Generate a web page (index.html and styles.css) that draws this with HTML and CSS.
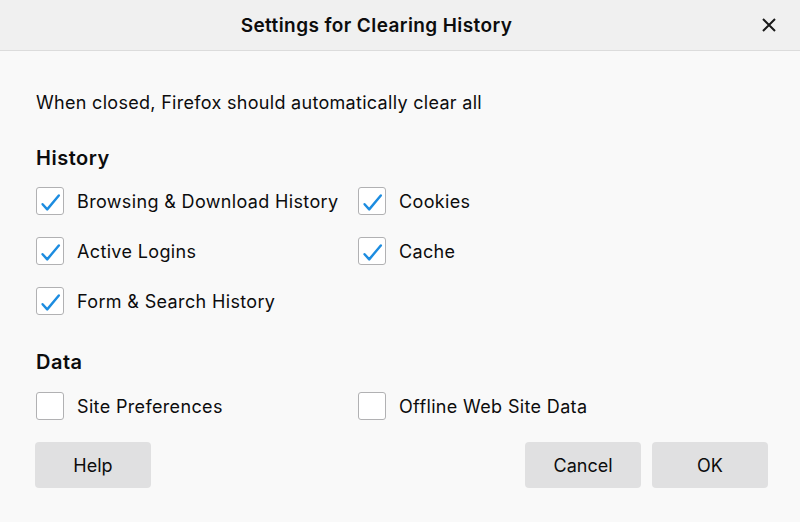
FILE: index.html
```html
<!DOCTYPE html>
<html>
<head>
<meta charset="utf-8">
<link rel="stylesheet" href="styles.css">
</head>
<body>
<div class="dialog">
  <header class="titlebar">
    <h1 class="title">Settings for Clearing History</h1>
    <button class="close" aria-label="Close">
      <svg width="14" height="14" viewBox="0 0 14 14"><path d="M1 1 L13 13 M13 1 L1 13" stroke="#1a1a1a" stroke-width="2" fill="none"/></svg>
    </button>
  </header>
  <main class="content">
    <p class="intro">When closed, Firefox should automatically clear all</p>
    <h2 class="section">History</h2>
    <div class="grid">
      <label class="opt"><span class="box checked"><svg viewBox="0 0 28 28"><path d="M6 17.5 L11 23 L23.5 8" stroke="#1c8ce0" stroke-width="2.6" fill="none" stroke-linecap="round" stroke-linejoin="round"/></svg></span>Browsing &amp; Download History</label>
      <label class="opt"><span class="box checked"><svg viewBox="0 0 28 28"><path d="M6 17.5 L11 23 L23.5 8" stroke="#1c8ce0" stroke-width="2.6" fill="none" stroke-linecap="round" stroke-linejoin="round"/></svg></span>Cookies</label>
      <label class="opt"><span class="box checked"><svg viewBox="0 0 28 28"><path d="M6 17.5 L11 23 L23.5 8" stroke="#1c8ce0" stroke-width="2.6" fill="none" stroke-linecap="round" stroke-linejoin="round"/></svg></span>Active Logins</label>
      <label class="opt"><span class="box checked"><svg viewBox="0 0 28 28"><path d="M6 17.5 L11 23 L23.5 8" stroke="#1c8ce0" stroke-width="2.6" fill="none" stroke-linecap="round" stroke-linejoin="round"/></svg></span>Cache</label>
      <label class="opt"><span class="box checked"><svg viewBox="0 0 28 28"><path d="M6 17.5 L11 23 L23.5 8" stroke="#1c8ce0" stroke-width="2.6" fill="none" stroke-linecap="round" stroke-linejoin="round"/></svg></span>Form &amp; Search History</label>
    </div>
    <h2 class="section data">Data</h2>
    <div class="grid data-grid">
      <label class="opt"><span class="box"></span>Site Preferences</label>
      <label class="opt"><span class="box"></span>Offline Web Site Data</label>
    </div>
    <div class="buttons">
      <button class="btn">Help</button>
      <div class="right">
        <button class="btn">Cancel</button>
        <button class="btn">OK</button>
      </div>
    </div>
  </main>
</div>
</body>
</html>
```
FILE: styles.css
```css
html, body {
  margin: 0;
  padding: 0;
  background: #f9f9f9;
}
body {
  font-family: Inter, "Noto Sans", sans-serif;
  color: #0c0c0d;
  width: 800px;
  height: 522px;
  overflow: hidden;
}
.titlebar {
  height: 51px;
  background: #f0f0f0;
  border-bottom: 1px solid #dcdcdc;
  box-sizing: border-box;
  display: flex;
  align-items: center;
  justify-content: center;
  padding-right: 47px;
  position: relative;
}
.title {
  margin: 0;
  font-size: 19px;
  font-weight: 600;
  letter-spacing: 0.4px;
}
.close {
  position: absolute;
  right: 24px;
  top: 18px;
  width: 14px;
  height: 14px;
  padding: 0;
  border: 0;
  background: none;
  display: flex;
}
.content {
  padding: 0 32px 0 36px;
}
.intro {
  margin: 41px 0 0;
  font-size: 18px;
  line-height: 22px;
  letter-spacing: 0.3px;
}
.section {
  margin: 32px 0 0;
  font-size: 20px;
  font-weight: 600;
  line-height: 24px;
  letter-spacing: 0.5px;
}
.section.data {
  margin-top: 35px;
}
.grid {
  display: grid;
  grid-template-columns: 322px auto;
  row-gap: 22px;
  margin-top: 17px;
}
.data-grid {
  margin-top: 18px;
}
.opt {
  display: flex;
  align-items: center;
  font-size: 18px;
  letter-spacing: 0.35px;
  height: 28px;
}
.box {
  width: 26px;
  height: 26px;
  border: 1px solid #b1b1b3;
  border-radius: 3px;
  background: #fff;
  margin-right: 13px;
  flex: none;
}
.box svg {
  width: 26px;
  height: 26px;
  display: block;
}
.buttons {
  display: flex;
  justify-content: space-between;
  margin-top: 22px;
  margin-left: -1px;
}
.right {
  display: flex;
  gap: 11px;
}
.btn {
  width: 116px;
  height: 46px;
  border: 0;
  border-radius: 4px;
  background: #e0e0e1;
  font-family: Inter, "Noto Sans", sans-serif;
  font-size: 18px;
  color: #0c0c0d;
}
```
